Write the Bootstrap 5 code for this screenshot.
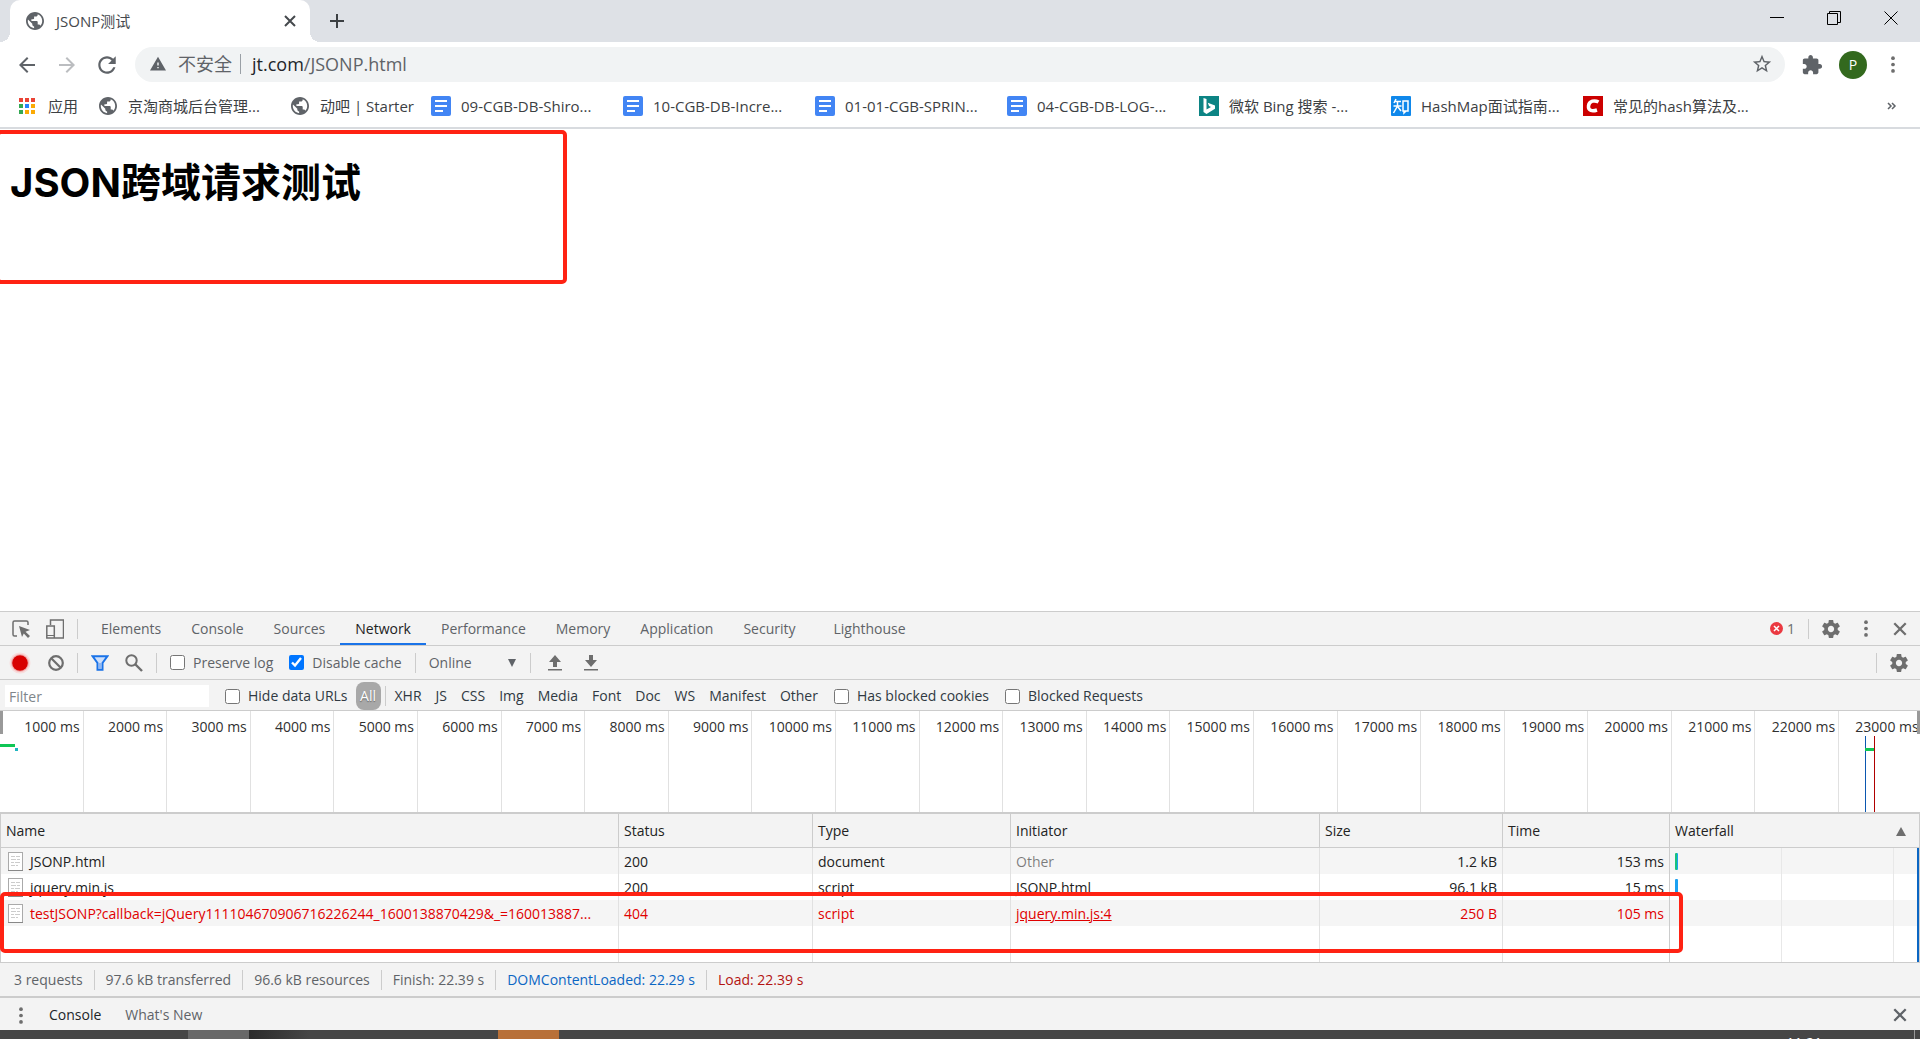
<!DOCTYPE html>
<html lang="zh-CN">
<head>
<meta charset="utf-8">
<meta name="viewport" content="width=device-width, initial-scale=1">
<title>JSONP测试</title>
<link href="https://cdn.jsdelivr.net/npm/bootstrap@5.3.0/dist/css/bootstrap.min.css" rel="stylesheet">
<style>
  body { font-family: "Open Sans", "Noto Sans CJK SC", sans-serif; font-size: 14px; line-height: 20px; color: #333; background: #fff; overflow: hidden; }
  svg { display: block; flex: none; }
  button { border: 0; background: none; padding: 0; color: inherit; }
  a { color: inherit; text-decoration: none; }
  .cjk { font-size: 15px; }

  /* browser frame */
  .tabstrip { height: 42px; background: #dee1e6; padding: 0 22px 0 10px; }
  .browser-tab { position: relative; width: 300px; height: 42px; background: #fff; border-radius: 10px 10px 0 0; padding: 0 13px 0 16px; color: #45494d; }
  .browser-tab::before, .browser-tab::after { content: ""; position: absolute; bottom: 0; width: 10px; height: 10px; }
  .browser-tab::before { left: -10px; background: radial-gradient(circle at 0 0, transparent 10px, #fff 10px); }
  .browser-tab::after { right: -10px; background: radial-gradient(circle at 100% 0, transparent 10px, #fff 10px); }
  .new-tab { margin-left: 19px; }
  .win-controls { gap: 43px; height: 36px; color: #000; }
  .toolbar { height: 45px; padding: 0 17px 0 15px; color: #5f6368; }
  .omnibox { height: 35px; border-radius: 18px; background: #f1f3f4; padding: 0 12px 2px 15px; margin: 0 16px 0 16px; font-size: 18px; line-height: 24px; }
  .omni-sep { width: 1px; height: 20px; background: #9aa0a6; margin: 0 11px 0 8px; }
  .avatar { width: 28px; height: 28px; background: #33691e; color: #fff; }
  .bookmarks { height: 40px; padding: 0 22px 2px 18px; color: #3c4043; font-size: 15px; }
  .apps-link { width: 80px; gap: 12px; flex: none; }
  .bookmark { width: 192px; gap: 10px; flex: none; white-space: nowrap; }
  .bookmark-short { width: 141px; }
  .bookmark-last { width: auto; }
  .chrome-edge { height: 2px; background: #d8dbdf; }

  /* page */
  .page-area { position: relative; min-height: 0; padding: 28px 10px; color: #000; }
  .page-title { font-family: Inter, "Noto Sans CJK SC", sans-serif; font-size: 40px; line-height: 52px; font-weight: 700; margin: 0; }
  .outline-box { position: absolute; border: 4px solid #ff2213; border-radius: 5px; pointer-events: none; }
  .outline-title { left: -4px; top: 1px; width: 571px; height: 154px; }
  .outline-row { left: -1px; right: 236px; top: 78px; height: 61px; }

  /* devtools */
  .devtools { background: #f3f3f3; border-top: 1px solid #ccc; }
  .dt-row { border-bottom: 1px solid #ccc; color: #5f6368; }
  .dt-tabs { height: 34px; padding: 0 8px 0 12px; }
  .dt-actions { height: 34px; padding: 0 8px 0 8px; }
  .dt-filter { height: 31px; padding: 2px 8px 0 5px; color: #303942; }
  .dt-sep { width: 1px; height: 20px; background: #ccc; flex: none; margin: 0 13px; }
  .dt-tab { height: 33px; padding: 3px 15px 0; border-bottom: 2px solid transparent; }
  .dt-tab.active { border-color: #1a73e8; color: #222; }
  .dt-gray { color: #6e6e6e; }
  .tick { width: 15px; height: 15px; margin: 0; flex: none; }
  .throttle { appearance: none; border: 0; background: transparent; width: 90px; padding: 0; color: inherit; }
  .caret-mark { margin-left: -12px; pointer-events: none; }
  .filter-box { width: 204px; height: 22px; border: 0; padding: 0 4px; background: #fff; margin-right: 16px; }
  .filter-box::placeholder { color: #80868b; }
  .pill-all { background: #a8a8a8; color: #fff; border-radius: 8px; height: 28px; width: 25px; text-shadow: 0 1px 1px #666; }
  .filter-types { gap: 14px; margin-left: 9px; }

  .timeline { position: relative; height: 103px; background: #fff; border-bottom: 2px solid #ccc; overflow: hidden; }
  .tl-cell { width: 4.354%; flex: none; border-right: 1px solid #e1e1e1; padding: 6px 3px 0 0; text-align: right; color: #303030; }
  .tl-grip { position: absolute; top: 0; width: 3px; height: 23px; background: #999; }
  .tl-mark { position: absolute; }

  .requests { position: relative; height: 148px; background: #fff; border-left: 1px solid #ccc; border-right: 1px solid #ccc; }
  .net-table { width: 100%; height: 100%; table-layout: fixed; border-collapse: separate; border-spacing: 0; color: #222; }
  .net-table th { height: 34px; background: #f3f3f3; font-weight: 400; border-bottom: 1px solid #ccc; border-right: 1px solid #ccc; padding: 1px 5px 0; }
  .net-table td { height: 26px; padding: 1px 5px 0; border-right: 1px solid #e1e1e1; white-space: nowrap; overflow: hidden; }
  .net-table th:last-child, .net-table td:last-child { border-right: 0; }
  .net-table td:nth-last-child(2) { border-right-color: #ccc; }
  .net-table tr.shade { background: #f5f5f5; }
  .net-table tr.failed { color: #e00000; }
  .net-table tr.filler td { height: auto; }
  .net-table td:last-child { background: linear-gradient(#e8e8e8, #e8e8e8) 111px 0 / 1px 100% no-repeat, linear-gradient(#e8e8e8, #e8e8e8) 223px 0 / 1px 100% no-repeat, linear-gradient(#0b66c3, #0b66c3) 100% 0 / 2px 100% no-repeat; }
  .file-cell { gap: 7px; padding-left: 2px; }
  .net-bar { width: 3px; height: 17px; border-radius: 1px; background: #1ba1f2; }
  .net-bar-doc { background: linear-gradient(90deg, #19c37d 50%, #1ba1f2 50%); }
  .ref-link { text-decoration: underline; }

  .summary { height: 36px; border-top: 1px solid #ccc; border-bottom: 2px solid #ccc; padding-left: 3px; color: #5f6368; }
  .summary-item { padding: 0 11px; line-height: 20px; }
  .summary-item + .summary-item { border-left: 1px solid #ccc; }
  .summary-dom { color: #0b66c3; }
  .summary-load { color: #b31412; }
  .drawer { height: 32px; padding: 2px 8px 0 9px; color: #5f6368; }

  /* desktop taskbar */
  .taskbar { height: 9px; background: #464646; overflow: hidden; }
  .task-gap { width: 188px; }
  .task-light { width: 61px; background: #686868; }
  .task-dark { width: 249px; background: linear-gradient(90deg, #2b2b2b, #464646 60px); }
  .task-hot { width: 61px; background: #b87038; }
  .task-clock { padding-top: 3px; margin-right: 92px; color: #fff; }
  .task-edge { width: 1px; background: #999; margin-right: 5px; }
</style>
<script src="https://cdn.jsdelivr.net/npm/bootstrap@5.3.0/dist/js/bootstrap.bundle.min.js"></script>
</head>
<body class="d-flex flex-column vh-100">

<svg width="0" height="0" class="position-absolute" aria-hidden="true">
  <symbol id="i-globe" viewBox="2 2 20 20"><path fill="#5f6368" d="M12 2C6.480 2 2 6.480 2 12s4.480 10 10 10 10-4.480 10-10S17.520 2 12 2zm-1 17.930c-3.950-.490-7-3.850-7-7.930 0-.620.080-1.210.210-1.790L9 15v1c0 1.100.9 2 2 2v1.930zm6.900-2.540c-.260-.810-1-1.390-1.900-1.390h-1v-3c0-.550-.450-1-1-1H8v-2h2c.550 0 1-.450 1-1V7h2c1.100 0 2-.9 2-2v-.410c2.930 1.190 5 4.060 5 7.410 0 2.080-.8 3.970-2.100 5.390z"/></symbol>
  <symbol id="i-doc" viewBox="0 0 20 20"><rect width="20" height="20" rx="2" fill="#4285f4"/><path d="M4 5h12M4 10h12M4 15h8" stroke="#fff" stroke-width="2"/></symbol>
  <symbol id="i-gear" viewBox="2 2 20 20"><path fill="#6e6e6e" d="M19.430 12.980c.040-.320.070-.640.070-.980s-.030-.660-.070-.980l2.110-1.650c.190-.150.240-.420.120-.640l-2-3.460c-.120-.220-.390-.3-.610-.220l-2.490 1c-.520-.4-1.080-.730-1.690-.980l-.380-2.650C14.460 2.180 14.250 2 14 2h-4c-.250 0-.460.180-.490.420l-.380 2.650c-.610.250-1.170.590-1.690.980l-2.490-1c-.230-.090-.490 0-.610.220l-2 3.460c-.130.220-.070.490.120.640l2.110 1.650c-.040.320-.070.650-.070.980s.030.660.070.980l-2.110 1.650c-.190.150-.240.420-.120.640l2 3.460c.120.220.390.3.610.220l2.490-1c.520.4 1.080.730 1.690.980l.380 2.650c.030.240.240.420.490.420h4c.250 0 .460-.180.490-.420l.380-2.650c.610-.250 1.170-.590 1.690-.980l2.490 1c.230.090.490 0 .610-.220l2-3.460c.120-.220.070-.490-.120-.640l-2.110-1.650zM12 15.500c-1.930 0-3.500-1.570-3.500-3.500s1.570-3.500 3.500-3.500 3.500 1.570 3.500 3.500-1.570 3.500-3.500 3.500z"/></symbol>
  <symbol id="i-dots" viewBox="0 0 20 20"><g fill="#6e6e6e"><circle cx="10" cy="2.500" r="2.200"/><circle cx="10" cy="10" r="2.200"/><circle cx="10" cy="17.500" r="2.200"/></g></symbol>
  <symbol id="i-x" viewBox="0 0 14 14"><path d="M2 2l10 10M12 2L2 12" stroke="currentColor" stroke-width="2"/></symbol>
  <symbol id="i-file" viewBox="0 0 15 19"><rect x=".5" y=".5" width="14" height="18" fill="#fff" stroke="#aaa"/><path d="M0 18.500h15" stroke="#888"/><path d="M3 4.500h4m1 0h4M3 7.500h5m1 0h3M3 10.500h3m1 0h5M3 13.500h4m1 0h2" stroke="#ccc"/></symbol>
</svg>

<header>
  <div class="tabstrip d-flex align-items-center">
    <div class="browser-tab d-flex align-items-center">
      <svg width="18" height="18"><use href="#i-globe"/></svg>
      <span class="cjk ms-2 ps-1 flex-grow-1">JSONP测试</span>
      <button aria-label="关闭标签页"><svg width="14" height="14"><use href="#i-x"/></svg></button>
    </div>
    <button class="new-tab" aria-label="新标签页"><svg width="16" height="16" viewBox="0 0 16 16"><path d="M8 1v14M1 8h14" stroke="#3c4043" stroke-width="2"/></svg></button>
    <div class="win-controls d-flex align-items-center ms-auto align-self-start">
      <button aria-label="最小化"><svg width="14" height="14" viewBox="0 0 14 14"><path d="M0 6.500h14" stroke="#000"/></svg></button>
      <button aria-label="还原"><svg width="14" height="14" viewBox="0 0 14 14"><path d="M.5 2.500h10v11H.5zM2.500 2.500v-2h11v11h-3" fill="none" stroke="#000"/></svg></button>
      <button aria-label="关闭"><svg width="14" height="14" viewBox="0 0 14 14"><path d="M.5.5l13 13M13.500.5l-13 13" stroke="#000"/></svg></button>
    </div>
  </div>

  <div class="toolbar d-flex align-items-center">
    <div class="d-flex gap-3">
      <button aria-label="后退"><svg width="24" height="24" viewBox="0 0 24 24"><path fill="#5f6368" d="M20 11H7.830l5.590-5.590L12 4l-8 8 8 8 1.410-1.410L7.830 13H20v-2z"/></svg></button>
      <button aria-label="前进"><svg width="24" height="24" viewBox="0 0 24 24"><path fill="#bbbdc0" d="M12 4l-1.410 1.410L16.170 11H4v2h12.170l-5.580 5.590L12 20l8-8z"/></svg></button>
      <button aria-label="重新加载"><svg width="24" height="24" viewBox="1 1 22 22"><path fill="#5f6368" d="M17.650 6.350C16.200 4.900 14.210 4 12 4c-4.420 0-7.990 3.580-7.990 8s3.570 8 7.990 8c3.730 0 6.840-2.550 7.730-6h-2.080c-.820 2.330-3.040 4-5.650 4-3.310 0-6-2.690-6-6s2.690-6 6-6c1.660 0 3.140.690 4.220 1.780L13 11h7V4l-2.350 2.350z"/></svg></button>
    </div>
    <div class="omnibox d-flex align-items-center flex-grow-1">
      <svg width="16" height="16" viewBox="1 1 22 22"><path fill="#5f6368" d="M1 21h22L12 2 1 21zm12-3h-2v-2h2v2zm0-4h-2v-4h2v4z"/></svg>
      <span class="ms-2 ps-1">不安全</span>
      <span class="omni-sep"></span>
      <span class="flex-grow-1"><span class="text-dark">jt.com</span>/JSONP.html</span>
      <button aria-label="收藏"><svg width="22" height="22" viewBox="0 0 24 24"><path fill="#5f6368" d="M22 9.240l-7.190-.620L12 2 9.190 8.630 2 9.240l5.460 4.730L5.820 21 12 17.270 18.180 21l-1.630-7.030L22 9.240zM12 15.400l-3.760 2.270 1-4.280-3.320-2.880 4.380-.380L12 6.100l1.710 4.040 4.380.380-3.320 2.880 1 4.280L12 15.400z"/></svg></button>
    </div>
    <button aria-label="扩展程序"><svg width="22" height="22" viewBox="0 0 24 24"><path fill="#5f6368" d="M20.500 11H19V7c0-1.100-.9-2-2-2h-4V3.500C13 2.120 11.880 1 10.500 1S8 2.120 8 3.500V5H4c-1.100 0-1.990.9-1.990 2v3.800H3.500c1.490 0 2.700 1.210 2.700 2.700s-1.210 2.700-2.700 2.700H2V20c0 1.100.9 2 2 2h3.800v-1.500c0-1.490 1.210-2.700 2.700-2.700s2.700 1.210 2.700 2.700V22H17c1.100 0 2-.9 2-2v-4h1.500c1.380 0 2.500-1.120 2.500-2.500S21.880 11 20.500 11z"/></svg></button>
    <button class="avatar rounded-circle mx-3" aria-label="用户 P">P</button>
    <button aria-label="菜单"><svg width="20" height="17"><use href="#i-dots"/></svg></button>
  </div>

  <nav class="bookmarks d-flex align-items-center" aria-label="书签">
    <a href="#" class="apps-link d-flex align-items-center">
      <svg width="18" height="18" viewBox="0 0 18 18"><path fill="#ea4335" d="M1 1h4v4H1zM7 1h4v4H7zM13 1h4v4h-4z"/><path fill="#34a853" d="M1 7h4v4H1zM1 13h4v4H1z"/><path fill="#2684fc" d="M7 7h4v4H7z"/><path fill="#fbaa04" d="M13 7h4v4h-4zM7 13h4v4H7zM13 13h4v4h-4z"/></svg>应用</a>
    <a href="#" class="bookmark d-flex align-items-center"><svg width="20" height="18"><use href="#i-globe"/></svg>京淘商城后台管理...</a>
    <a href="#" class="bookmark bookmark-short d-flex align-items-center"><svg width="20" height="18"><use href="#i-globe"/></svg>动吧 | Starter</a>
    <a href="#" class="bookmark d-flex align-items-center"><svg width="20" height="20"><use href="#i-doc"/></svg>09-CGB-DB-Shiro...</a>
    <a href="#" class="bookmark d-flex align-items-center"><svg width="20" height="20"><use href="#i-doc"/></svg>10-CGB-DB-Incre...</a>
    <a href="#" class="bookmark d-flex align-items-center"><svg width="20" height="20"><use href="#i-doc"/></svg>01-01-CGB-SPRIN...</a>
    <a href="#" class="bookmark d-flex align-items-center"><svg width="20" height="20"><use href="#i-doc"/></svg>04-CGB-DB-LOG-...</a>
    <a href="#" class="bookmark d-flex align-items-center"><svg width="20" height="20" viewBox="0 0 20 20"><rect width="20" height="20" fill="#0c8484"/><path fill="#fff" d="M4.500 2l3 1v10.500l4.500-2.500-2-1-1.200-3.200L16 9.500v3.300L7.500 18l-3-2z"/></svg>微软 Bing 搜索 -...</a>
    <a href="#" class="bookmark d-flex align-items-center"><svg width="20" height="20" viewBox="0 0 20 20"><rect width="20" height="20" rx="1" fill="#0f88eb"/><path d="M5 3L3 7M4 5.500h6M2.500 10h8M6.500 5.500V10L2.500 17M7 11l3 4M12 5h5v10h-5zM13 15v2l2-2" fill="none" stroke="#fff" stroke-width="1.500"/></svg>HashMap面试指南...</a>
    <a href="#" class="bookmark bookmark-last d-flex align-items-center"><svg width="20" height="20" viewBox="0 0 20 20"><rect width="20" height="20" fill="#c00"/><path d="M15.500 6C12 4 6 4.500 5.500 10c-.5 5 4 5.500 8.500 4" fill="none" stroke="#fff" stroke-width="3.500"/></svg>常见的hash算法及...</a>
    <button class="ms-auto" aria-label="更多书签"><svg width="12" height="8" viewBox="0 0 12 8"><path d="M2 1l3 3-3 3M6 1l3 3-3 3" fill="none" stroke="#5f6368" stroke-width="1.500"/></svg></button>
  </nav>
  <div class="chrome-edge"></div>
</header>

<main class="page-area flex-grow-1">
  <h1 class="page-title">JSON跨域请求测试</h1>
  <div class="outline-box outline-title"></div>
</main>

<section class="devtools" aria-label="DevTools">
  <div class="dt-row dt-tabs d-flex align-items-center">
    <button aria-label="Inspect"><svg width="18" height="18" viewBox="0 0 18 18"><path d="M5 16H2.500Q1 16 1 14.500V2.500Q1 1 2.500 1h12Q16 1 16 2.500V5" fill="none" stroke="#6e6e6e" stroke-width="1.500"/><path fill="#6e6e6e" d="M7 6l11 4-4.500 1.800L18 16l-2 2-4.200-4.500L10 17z"/></svg></button>
    <button class="ms-3" aria-label="Toggle device"><svg width="18" height="20" viewBox="0 0 18 20"><path d="M4.500 6V1h13v18H9M.8 7h7.500v12H.8z" fill="none" stroke="#6e6e6e" stroke-width="1.500"/><path d="M1 16.500h7" stroke="#6e6e6e"/></svg></button>
    <span class="dt-sep me-2"></span>
    <button class="dt-tab">Elements</button>
    <button class="dt-tab">Console</button>
    <button class="dt-tab">Sources</button>
    <button class="dt-tab active">Network</button>
    <button class="dt-tab">Performance</button>
    <button class="dt-tab">Memory</button>
    <button class="dt-tab">Application</button>
    <button class="dt-tab">Security</button>
    <button class="dt-tab ms-2">Lighthouse</button>
    <div class="d-flex align-items-center ms-auto dt-gray">
      <svg width="13" height="13" viewBox="0 0 13 13"><circle cx="6.500" cy="6.500" r="6.500" fill="#eb3941"/><path d="M4 4l5 5M9 4L4 9" stroke="#fff" stroke-width="1.500"/></svg>
      <span class="ms-1">1</span>
      <span class="dt-sep"></span>
      <button aria-label="Settings"><svg width="18" height="18"><use href="#i-gear"/></svg></button>
      <button class="mx-3" aria-label="More"><svg width="20" height="17"><use href="#i-dots"/></svg></button>
      <button class="me-1" aria-label="Close"><svg width="16" height="16"><use href="#i-x"/></svg></button>
    </div>
  </div>

  <div class="dt-row dt-actions d-flex align-items-center">
    <button aria-label="Record"><svg width="24" height="24" viewBox="0 0 24 24"><circle cx="12" cy="12" r="10.500" fill="#f8dcdc"/><circle cx="12" cy="12" r="9" fill="#f0b0b0"/><circle cx="12" cy="12" r="7.800" fill="#d80000"/></svg></button>
    <button class="ms-3" aria-label="Clear"><svg width="16" height="16" viewBox="0 0 16 16"><circle cx="8" cy="8" r="6.800" fill="none" stroke="#6e6e6e" stroke-width="2.200"/><path d="M3 3l10 10" stroke="#6e6e6e" stroke-width="2.200"/></svg></button>
    <span class="dt-sep"></span>
    <button aria-label="Filter"><svg width="18" height="16" viewBox="0 0 18 16"><path d="M1.500 1.200h15L11.500 8v6.800h-5V8z" fill="#cfe0fb" stroke="#1a73e8" stroke-width="2"/><path d="M7.500 8h3v6h-3z" fill="#8fb6f2"/></svg></button>
    <button class="ms-3" aria-label="Search"><svg width="18" height="18" viewBox="0 0 18 18"><circle cx="6.500" cy="6.500" r="5.200" fill="none" stroke="#6e6e6e" stroke-width="2"/><path d="M10.500 10.500L17 17" stroke="#6e6e6e" stroke-width="2.400"/></svg></button>
    <span class="dt-sep"></span>
    <label class="d-flex align-items-center gap-2"><input type="checkbox" class="tick">Preserve log</label>
    <label class="d-flex align-items-center gap-2 ms-3"><input type="checkbox" class="tick" checked>Disable cache</label>
    <span class="dt-sep"></span>
    <select class="throttle" aria-label="Throttling"><option>Online</option></select>
    <svg class="caret-mark" width="10" height="8" viewBox="0 0 10 8"><path fill="#5f6368" d="M1 0h8L5 8z"/></svg>
    <span class="dt-sep me-3"></span>
    <button aria-label="Import"><svg width="16" height="16" viewBox="0 0 16 16"><path fill="#6e6e6e" d="M8 0l6 7h-4v5H6V7H2zM1 14h14v1.500H1z"/></svg></button>
    <button class="ms-3 ps-1" aria-label="Export"><svg width="16" height="16" viewBox="0 0 16 16"><path fill="#6e6e6e" d="M8 12l6-7h-4V0H6v5H2zM1 14h14v1.500H1z"/></svg></button>
    <span class="dt-sep ms-auto"></span>
    <button class="me-1" aria-label="Network settings"><svg width="18" height="18"><use href="#i-gear"/></svg></button>
  </div>

  <div class="dt-row dt-filter d-flex align-items-center">
    <input class="filter-box" type="text" placeholder="Filter" aria-label="Filter">
    <label class="d-flex align-items-center gap-2"><input type="checkbox" class="tick">Hide data URLs</label>
    <button class="pill-all ms-2">All</button>
    <span class="dt-sep ms-1 me-0"></span>
    <div class="filter-types d-flex">
      <button>XHR</button><button>JS</button><button>CSS</button><button>Img</button><button>Media</button><button>Font</button><button>Doc</button><button>WS</button><button>Manifest</button><button>Other</button>
    </div>
    <label class="d-flex align-items-center gap-2 ms-3"><input type="checkbox" class="tick">Has blocked cookies</label>
    <label class="d-flex align-items-center gap-2 ms-3"><input type="checkbox" class="tick">Blocked Requests</label>
  </div>

  <div class="timeline d-flex">
    <div class="tl-cell">1000 ms</div><div class="tl-cell">2000 ms</div><div class="tl-cell">3000 ms</div><div class="tl-cell">4000 ms</div><div class="tl-cell">5000 ms</div><div class="tl-cell">6000 ms</div><div class="tl-cell">7000 ms</div><div class="tl-cell">8000 ms</div><div class="tl-cell">9000 ms</div><div class="tl-cell">10000 ms</div><div class="tl-cell">11000 ms</div><div class="tl-cell">12000 ms</div><div class="tl-cell">13000 ms</div><div class="tl-cell">14000 ms</div><div class="tl-cell">15000 ms</div><div class="tl-cell">16000 ms</div><div class="tl-cell">17000 ms</div><div class="tl-cell">18000 ms</div><div class="tl-cell">19000 ms</div><div class="tl-cell">20000 ms</div><div class="tl-cell">21000 ms</div><div class="tl-cell">22000 ms</div><div class="tl-cell">23000 ms</div>
    <span class="tl-grip" style="left:0"></span>
    <span class="tl-grip" style="right:0"></span>
    <span class="tl-mark" style="left:0;top:33px;width:15px;height:3px;background:#0fc655"></span>
    <span class="tl-mark" style="left:15px;top:37px;width:3px;height:3px;background:#1fb5c0"></span>
    <span class="tl-mark" style="left:97.14%;top:25px;width:1px;height:76px;background:#0b57b0"></span>
    <span class="tl-mark" style="left:97.14%;top:37px;width:10px;height:3px;background:#0fc655"></span>
    <span class="tl-mark" style="left:97.6%;top:25px;width:1px;height:76px;background:#b00000"></span>
  </div>

  <div class="requests">
    <table class="net-table">
      <colgroup><col><col style="width:194px"><col style="width:198px"><col style="width:309px"><col style="width:183px"><col style="width:167px"><col style="width:249px"></colgroup>
      <thead><tr><th>Name</th><th>Status</th><th>Type</th><th>Initiator</th><th>Size</th><th>Time</th>
        <th><div class="d-flex align-items-center justify-content-between">Waterfall<svg class="me-2" width="10" height="9" viewBox="0 0 10 9"><path fill="#6e6e6e" d="M5 0l5 9H0z"/></svg></div></th></tr></thead>
      <tbody>
        <tr class="shade"><td><div class="file-cell d-flex align-items-center"><svg width="15" height="19"><use href="#i-file"/></svg>JSONP.html</div></td><td>200</td><td>document</td><td class="text-black-50">Other</td><td class="text-end">1.2 kB</td><td class="text-end">153 ms</td><td><div class="net-bar net-bar-doc"></div></td></tr>
        <tr><td><div class="file-cell d-flex align-items-center"><svg width="15" height="19"><use href="#i-file"/></svg>jquery.min.js</div></td><td>200</td><td>script</td><td>JSONP.html</td><td class="text-end">96.1 kB</td><td class="text-end">15 ms</td><td><div class="net-bar"></div></td></tr>
        <tr class="shade failed"><td><div class="file-cell d-flex align-items-center"><svg width="15" height="19"><use href="#i-file"/></svg>testJSONP?callback=jQuery111104670906716226244_1600138870429&amp;_=160013887...</div></td><td>404</td><td>script</td><td><a href="#" class="ref-link">jquery.min.js:4</a></td><td class="text-end">250 B</td><td class="text-end">105 ms</td><td></td></tr>
        <tr class="filler"><td></td><td></td><td></td><td></td><td></td><td></td><td></td></tr>
      </tbody>
    </table>
    <div class="outline-box outline-row"></div>
  </div>

  <div class="summary d-flex align-items-center">
    <span class="summary-item">3 requests</span>
    <span class="summary-item">97.6 kB transferred</span>
    <span class="summary-item">96.6 kB resources</span>
    <span class="summary-item">Finish: 22.39 s</span>
    <span class="summary-item summary-dom">DOMContentLoaded: 22.29 s</span>
    <span class="summary-item summary-load">Load: 22.39 s</span>
  </div>

  <div class="drawer d-flex align-items-center">
    <button aria-label="More tools"><svg width="24" height="17"><use href="#i-dots"/></svg></button>
    <button class="ms-3 text-dark">Console</button>
    <button class="ms-4">What's New</button>
    <button class="ms-auto me-1" aria-label="Close drawer"><svg width="16" height="16"><use href="#i-x"/></svg></button>
  </div>
</section>

<footer class="taskbar d-flex">
  <span class="task-gap"></span><span class="task-light"></span><span class="task-dark"></span><span class="task-hot"></span>
  <span class="task-clock ms-auto">11:21</span><span class="task-edge"></span>
</footer>
</body>
</html>
